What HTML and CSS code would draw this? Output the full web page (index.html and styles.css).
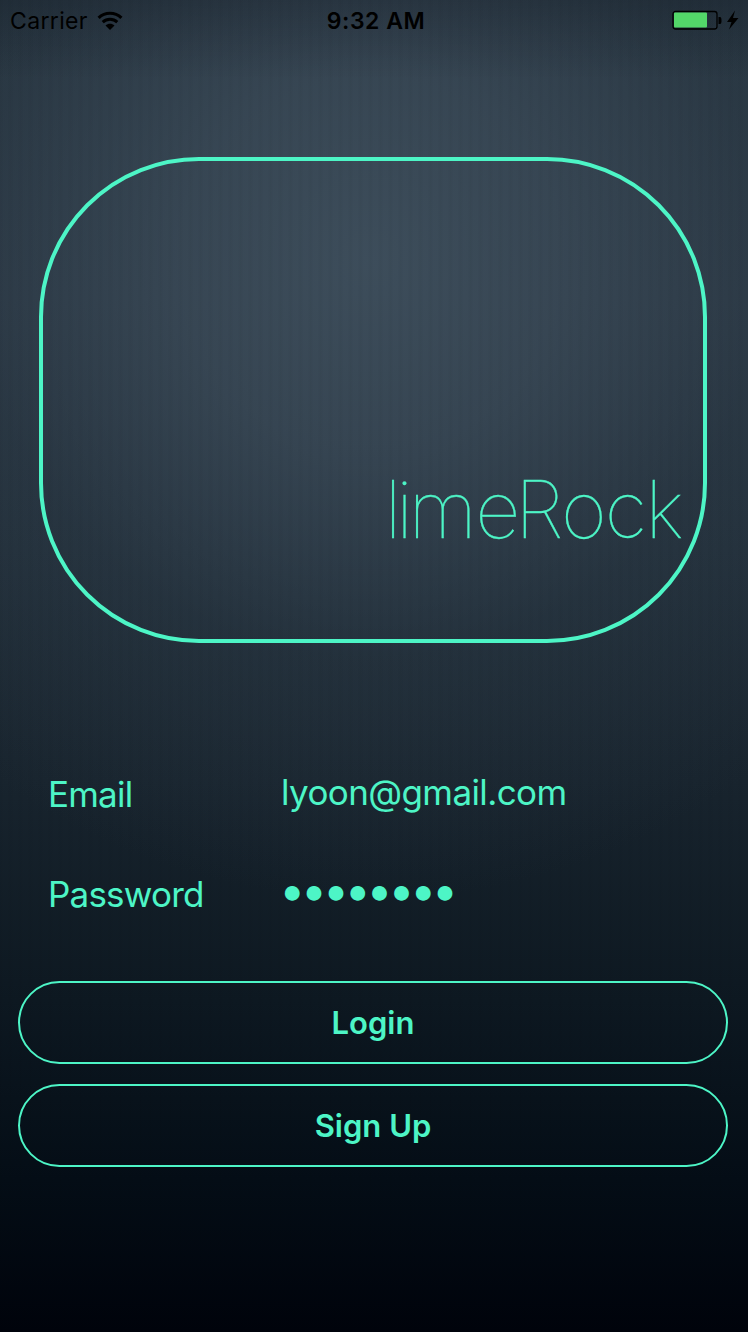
FILE: index.html
```html
<!DOCTYPE html>
<html lang="en">
<head>
<meta charset="utf-8">
<title>limeRock</title>
<link rel="stylesheet" href="styles.css">
</head>
<body>
<div class="screen">
  <header class="status">
    <div class="status-left">
      <span class="carrier">Carrier</span>
      <svg class="wifi" width="26" height="20" viewBox="0 0 26 20">
        <path d="M1.6 6.8C8.1.7 17.9.7 24.400 6.800" fill="none" stroke="#000" stroke-width="3.200"/>
        <path d="M5.700 11.100C10 7.200 16 7.200 20.300 11.100" fill="none" stroke="#000" stroke-width="3"/>
        <path d="M8.500 14.500C11 12.200 15 12.200 17.500 14.500L13 19Z" fill="#000"/>
      </svg>
    </div>
    <span class="time">9:32 AM</span>
    <div class="status-right">
      <svg width="67" height="22" viewBox="0 0 67 22">
        <rect x="1" y="1.500" width="44" height="17.500" rx="2.500" fill="none" stroke="#000" stroke-width="1.300"/>
        <rect x="2" y="2.500" width="33" height="15" rx="1" fill="#53d769"/>
        <path d="M46.500 7h1.500q1.500 0 1.500 3.500t-1.500 3.500h-1.500z"/>
        <path d="M63 .5L55 12H59.500L57 19.500L66.500 8H61Z"/>
      </svg>
    </div>
  </header>
  <main class="content">
    <div class="logo"><h1 class="brand"><span class="tight">l</span><span class="snug">i</span>m<span class="tight">e</span>Rock</h1></div>
    <form class="form">
      <div class="row">
        <span class="label">Email</span>
        <span class="value">lyoon@gmail.com</span>
      </div>
      <div class="row">
        <span class="label">Password</span>
        <span class="value dots">●●●●●●●●</span>
      </div>
      <div class="actions">
        <button class="button" type="button">Login</button>
        <button class="button" type="button">Sign Up</button>
      </div>
    </form>
  </main>
</div>
</body>
</html>
```
FILE: styles.css
```css
* { box-sizing: border-box; }
body { margin: 0; }
.screen {
  width: 748px;
  height: 1332px;
  overflow: hidden;
  font-family: Inter, "Liberation Sans", sans-serif;
  color: #4df5c6;
  background:
    repeating-linear-gradient(90deg, rgba(0,0,0,.03) 0 1px, transparent 4px 7px, rgba(0,0,0,.03) 10px),
    linear-gradient(180deg, rgba(0,4,12,.2) 0, rgba(0,4,12,0) 80px),
    radial-gradient(ellipse 640px 640px at 370px 260px, rgba(66,83,97,.8) 0%, rgba(62,78,92,.68) 30%, rgba(50,65,78,.32) 62%, rgba(30,42,52,0) 100%),
    linear-gradient(180deg, #26343f 0, #293642 300px, #212e39 550px, #18242e 780px, #0d1821 1000px, #040d16 1180px, #00030b 1332px);
}
.status {
  height: 40px;
  display: grid;
  grid-template-columns: 1fr auto 1fr;
  align-items: center;
  padding: 0 9px 0 10px;
  color: #000;
  font-size: 24px;
  line-height: 40px;
}
.status-left { display: flex; align-items: center; gap: 9px; }
.carrier { font-size: 23px; letter-spacing: .35px; padding-top: 1px; }
.time { font-size: 23px; font-weight: 600; letter-spacing: .5px; padding: 1px 0 0 3px; }
.status-right { display: flex; justify-content: flex-end; }
.content { padding: 117px 20px 0 18px; }
.logo {
  width: 668px;
  height: 486px;
  margin-left: 21px;
  border: 4px solid #4df5c6;
  border-radius: 160px;
  display: flex;
  justify-content: flex-end;
  align-items: flex-end;
  padding: 0 21px 83px 0;
}
.brand {
  margin: 0;
  font-size: 79px;
  font-weight: 100;
  line-height: 94px;
  letter-spacing: -1.8px;
  white-space: nowrap;
  -webkit-text-stroke: .3px #4df5c6;
}
.tight { letter-spacing: -5.5px; }
.snug { letter-spacing: -4.5px; }
.form { padding-top: 102px; }
.row {
  display: grid;
  grid-template-columns: 233px 1fr;
  height: 100px;
  padding-left: 30px;
  font-size: 35px;
  font-weight: 400;
  letter-spacing: -.8px;
  line-height: 98px;
}
.value { line-height: 95px; white-space: nowrap; letter-spacing: -.6px; }
.dots { font-family: "DejaVu Sans", sans-serif; font-size: 34px; font-weight: 300; letter-spacing: 1.3px; line-height: 93px; padding-left: 1px; }
.actions { display: grid; gap: 20px; padding-top: 36px; }
.button {
  height: 83px;
  padding: 0;
  border: 2px solid #4df5c6;
  border-radius: 42px;
  background: none;
  color: inherit;
  font: 600 31px/79px Inter, "Liberation Sans", sans-serif;
}
```
